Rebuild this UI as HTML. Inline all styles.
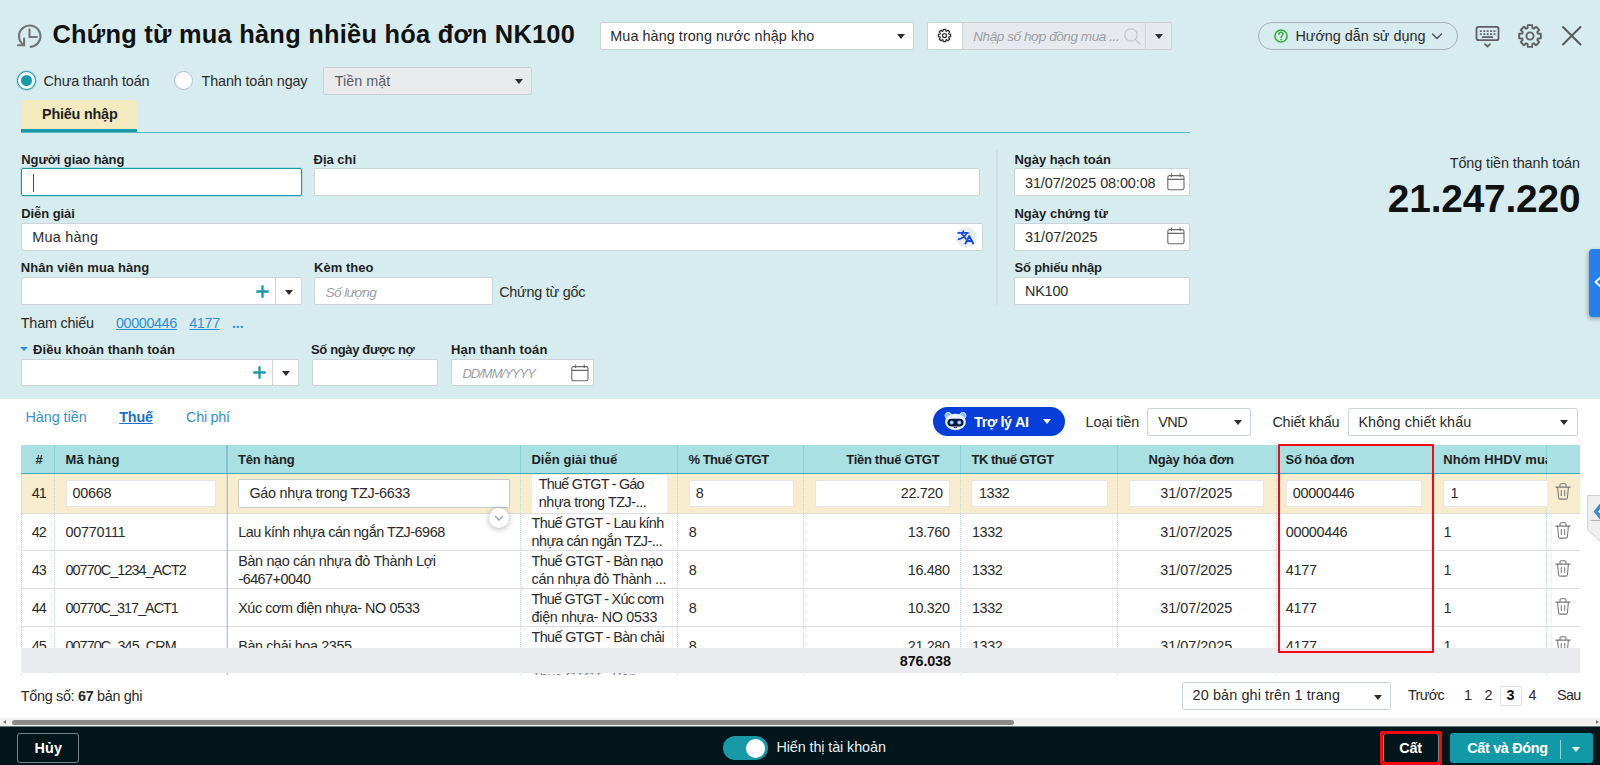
<!DOCTYPE html>
<html lang="vi"><head><meta charset="utf-8"><title>Chứng từ mua hàng nhiều hóa đơn NK100</title>
<style>
*{box-sizing:border-box;margin:0;padding:0}
html,body{width:1600px;height:765px;overflow:hidden;background:#fff}
body{font-family:"Liberation Sans",sans-serif;font-size:13.7px;color:#212121;position:relative}
.b{position:absolute}
.t{position:absolute;white-space:pre;line-height:20px;color:#2a2a2a}
</style></head><body>
<div class="b" style="left:0;top:0;width:1600px;height:399px;background:#d7ecef"></div>
<svg class="b" style="left:14px;top:22px" width="30" height="28" viewBox="0 0 30 28" fill="none" stroke="#747474" stroke-width="2.1" stroke-linecap="round" stroke-linejoin="miter">
<path d="M16.72 24.84A10.7 10.7 0 1 0 10.1 23.3"/><path d="M3.9 23.3H10.1V16.5"/><path d="M15.5 7.2V15H22.8"/></svg>
<div class="t" style="left:52.50px;top:24.00px;font-size:25.4px;letter-spacing:0.252px;font-weight:bold;color:#111;">Chứng từ mua hàng nhiều hóa đơn NK100</div>
<div class="b" style="left:600px;top:22px;width:314px;height:28px;background:#fff;border:1px solid #cdd4d9;border-radius:2px;"></div>
<div class="t" style="left:610.30px;top:26.00px;font-size:14.4px;letter-spacing:0.061px;">Mua hàng trong nước nhập kho</div>
<div class="b" style="left:897px;top:33.5px;width:0;height:0;border-left:4.0px solid transparent;border-right:4.0px solid transparent;border-top:5px solid #2e2e2e"></div>
<div class="b" style="left:927px;top:22px;width:36px;height:28px;background:#fff;border:1px solid #cdd4d9;border-radius:2px 0 0 2px;"></div>
<svg class="b" style="left:937px;top:28px" width="15" height="15" viewBox="0 0 15 15" fill="none" stroke="#333" stroke-width="1.25" stroke-linejoin="round"><circle cx="7.5" cy="7.5" r="2"/><path d="M6.11 3.01L6.25 1.33L8.75 1.33L8.89 3.01L9.69 3.34L10.98 2.25L12.75 4.02L11.66 5.31L11.99 6.11L13.67 6.25L13.67 8.75L11.99 8.89L11.66 9.69L12.75 10.98L10.98 12.75L9.69 11.66L8.89 11.99L8.75 13.67L6.25 13.67L6.11 11.99L5.31 11.66L4.02 12.75L2.25 10.98L3.34 9.69L3.01 8.89L1.33 8.75L1.33 6.25L3.01 6.11L3.34 5.31L2.25 4.02L4.02 2.25L5.31 3.34z"/></svg>
<div class="b" style="left:962px;top:22px;width:184px;height:28px;background:#e6eaee;border:1px solid #cdd4d9;border-radius:0;"></div>
<div class="t" style="left:973.20px;top:27.00px;font-size:13.6px;letter-spacing:-0.462px;font-style:italic;color:#9b9fa4;">Nhập số hợp đồng mua ...</div>
<svg class="b" style="left:1123px;top:27px" width="19" height="19" viewBox="0 0 19 19" fill="none" stroke="#c3c8cd" stroke-width="1.3" stroke-linecap="round"><circle cx="8" cy="8" r="6.2"/><path d="M12.7 12.7l4 4"/></svg>
<div class="b" style="left:1145px;top:22px;width:27px;height:28px;background:#e6eaee;border:1px solid #cdd4d9;border-radius:0 2px 2px 0;"></div>
<div class="b" style="left:1154.5px;top:33.5px;width:0;height:0;border-left:4.0px solid transparent;border-right:4.0px solid transparent;border-top:5px solid #2e2e2e"></div>
<div class="b" style="left:1258px;top:22px;width:200px;height:28px;border:1px solid #aab2b8;border-radius:14px"></div>
<svg class="b" style="left:1273px;top:28px" width="16" height="16" viewBox="0 0 16 16" fill="none"><circle cx="8" cy="8" r="6.1" stroke="#35a935" stroke-width="1.5"/><path d="M5.9 6.4c0-1.3.9-2.1 2.1-2.1s2.1.8 2.1 1.9c0 1.6-2 1.6-2 3.3" stroke="#35a935" stroke-width="1.4" stroke-linecap="round"/><circle cx="8.1" cy="11.6" r=".9" fill="#35a935"/></svg>
<div class="t" style="left:1295.40px;top:26.00px;font-size:14.4px;letter-spacing:-0.019px;">Hướng dẫn sử dụng</div>
<svg class="b" style="left:1431px;top:31.5px" width="12" height="9" viewBox="0 0 12 9" fill="none" stroke="#555" stroke-width="1.5" stroke-linecap="round" stroke-linejoin="round"><path d="M1.5 2l4.5 4.5L10.5 2"/></svg>
<svg class="b" style="left:1475px;top:25px" width="26" height="24" viewBox="0 0 26 24" fill="none" stroke="#5f5f5f" stroke-width="1.75" stroke-linecap="round" stroke-linejoin="round">
<rect x="1.5" y="1.8" width="22" height="13.4" rx="2"/><path d="M5.5 6h.6M9 6h.6M12.4 6h.6M15.8 6h.6M19.2 6h.6M5.5 9h.6M9 9h.6M12.4 9h.6M15.8 9h.6M19.2 9h.6M7.5 12h10"/><path d="M10 19.2l2.5 2.3 2.5-2.3"/></svg>
<svg class="b" style="left:1517px;top:23px" width="26" height="26" viewBox="0 0 24 24" fill="none" stroke="#5f5f5f" stroke-width="1.75" stroke-linejoin="round"><circle cx="12" cy="12" r="3.3"/><path d="M9.75 4.74L9.97 2.00L14.03 2.00L14.25 4.74L15.55 5.28L17.64 3.50L20.50 6.36L18.72 8.45L19.26 9.75L22.00 9.97L22.00 14.03L19.26 14.25L18.72 15.55L20.50 17.64L17.64 20.50L15.55 18.72L14.25 19.26L14.03 22.00L9.97 22.00L9.75 19.26L8.45 18.72L6.36 20.50L3.50 17.64L5.28 15.55L4.74 14.25L2.00 14.03L2.00 9.97L4.74 9.75L5.28 8.45L3.50 6.36L6.36 3.50L8.45 5.28z"/></svg>
<svg class="b" style="left:1561px;top:25px" width="22" height="22" viewBox="0 0 22 22" fill="none" stroke="#5a5a5a" stroke-width="2" stroke-linecap="round"><path d="M2 2l17.5 17.5M19.5 2L2 19.5"/></svg>
<div class="b" style="left:17px;top:71px;width:19px;height:19px;border-radius:50%;background:#fff;border:1px solid #1a9aa9;box-shadow:0 0 0 1px rgba(26,154,169,.25)"></div>
<div class="b" style="left:21px;top:75px;width:11px;height:11px;border-radius:50%;background:#1a9aa9"></div>
<div class="t" style="left:43.60px;top:71.00px;font-size:14.4px;letter-spacing:-0.151px;">Chưa thanh toán</div>
<div class="b" style="left:174px;top:71px;width:19px;height:19px;border-radius:50%;background:#fff;border:1px solid #b9c0c6"></div>
<div class="t" style="left:201.60px;top:71.00px;font-size:14.4px;letter-spacing:-0.148px;">Thanh toán ngay</div>
<div class="b" style="left:323px;top:67px;width:209px;height:28px;background:#e8eaed;border:1px solid #cdd2d7;border-radius:2px;"></div>
<div class="t" style="left:334.70px;top:71.00px;font-size:14.4px;letter-spacing:0.018px;color:#5a5f64;">Tiền mặt</div>
<div class="b" style="left:514.6px;top:78.5px;width:0;height:0;border-left:4.0px solid transparent;border-right:4.0px solid transparent;border-top:5px solid #2e2e2e"></div>
<div class="b" style="left:21px;top:100px;width:116px;height:32px;background:#f3eabf;border-radius:4px 4px 0 0;border-bottom:3px solid #1a9aa9"></div>
<div class="t" style="left:42.00px;top:104.00px;font-size:14.4px;letter-spacing:-0.206px;font-weight:bold;color:#1f1f1f;">Phiếu nhập</div>
<div class="b" style="left:21px;top:132px;width:1169px;height:1px;background:#55b9c3"></div>
<div class="t" style="left:21.30px;top:150.00px;font-size:13.0px;letter-spacing:-0.107px;font-weight:bold;color:#1f1f1f;">Người giao hàng</div>
<div class="b" style="left:21px;top:168px;width:281px;height:28px;background:#fff;border:1px solid #1a9aa9;border-radius:2px;box-shadow:0 0 0 1px rgba(26,154,169,.18)"></div>
<div class="b" style="left:32.5px;top:173.5px;width:1px;height:18px;background:#444"></div>
<div class="t" style="left:313.60px;top:150.00px;font-size:13.0px;letter-spacing:-0.018px;font-weight:bold;color:#1f1f1f;">Địa chỉ</div>
<div class="b" style="left:314px;top:168px;width:666px;height:28px;background:#fff;border:1px solid #cdd4d9;border-radius:2px;"></div>
<div class="b" style="left:995.5px;top:150px;width:2px;height:155px;background:#cfe3e7"></div>
<div class="t" style="left:1014.40px;top:150.00px;font-size:13.0px;letter-spacing:-0.021px;font-weight:bold;color:#1f1f1f;">Ngày hạch toán</div>
<div class="b" style="left:1014px;top:168px;width:176px;height:28px;background:#fff;border:1px solid #cdd4d9;border-radius:2px;"></div>
<div class="t" style="left:1025.00px;top:173.00px;font-size:14.4px;letter-spacing:-0.081px;">31/07/2025 08:00:08</div>
<svg class="b" style="left:1166.5px;top:172.5px" width="18" height="18" viewBox="0 0 18 18" fill="none" stroke="#6a6a6a" stroke-width="1.1"><rect x="0.8" y="2.6" width="16.2" height="14.2" rx="1.8"/><path d="M0.8 6.4h16.2M4.6 0.6v3.4M13.2 0.6v3.4"/></svg>
<div class="t" style="left:1449.72px;top:153.00px;font-size:14.4px;letter-spacing:-0.092px;">Tổng tiền thanh toán</div>
<div class="t" style="left:1387.83px;top:189.00px;font-size:38.8px;letter-spacing:-0.169px;font-weight:bold;color:#111;">21.247.220</div>
<div class="t" style="left:21.20px;top:204.00px;font-size:13.0px;letter-spacing:-0.065px;font-weight:bold;color:#1f1f1f;">Diễn giải</div>
<div class="b" style="left:21px;top:223px;width:962px;height:28px;background:#fff;border:1px solid #cdd4d9;border-radius:2px;"></div>
<div class="t" style="left:32.30px;top:227.00px;font-size:14.4px;letter-spacing:0.248px;">Mua hàng</div>
<div class="b" style="left:955.5px;top:227px;width:21px;height:21px;border-radius:50%;background:#eaedf1"></div>
<svg class="b" style="left:955px;top:227px" width="22" height="21" viewBox="0 0 22 21" fill="none" stroke="#164ad8" stroke-width="1.75" stroke-linecap="round" stroke-linejoin="round"><path d="M3.2 5.9H13M8.3 4.1V5.9M6.9 7L10.8 11.900M11.800 6Q10 10.500 3.500 12.300"/><path d="M10.4 16.500L14.3 9l3.900 7.500M11.900 14h4.800" stroke-width="1.9"/></svg>
<div class="t" style="left:1014.40px;top:204.00px;font-size:13.0px;letter-spacing:0.02px;font-weight:bold;color:#1f1f1f;">Ngày chứng từ</div>
<div class="b" style="left:1014px;top:223px;width:176px;height:28px;background:#fff;border:1px solid #cdd4d9;border-radius:2px;"></div>
<div class="t" style="left:1025.00px;top:227.00px;font-size:14.4px;letter-spacing:0.047px;">31/07/2025</div>
<svg class="b" style="left:1166.5px;top:226.5px" width="18" height="18" viewBox="0 0 18 18" fill="none" stroke="#6a6a6a" stroke-width="1.1"><rect x="0.8" y="2.6" width="16.2" height="14.2" rx="1.8"/><path d="M0.8 6.4h16.2M4.6 0.6v3.4M13.2 0.6v3.4"/></svg>
<div class="t" style="left:20.80px;top:258.00px;font-size:13.0px;letter-spacing:0.076px;font-weight:bold;color:#1f1f1f;">Nhân viên mua hàng</div>
<div class="b" style="left:21px;top:277px;width:281px;height:28px;background:#fff;border:1px solid #cdd4d9;border-radius:2px;"></div>
<div class="b" style="left:275px;top:278px;width:1px;height:26px;background:#cdd4d9"></div>
<svg class="b" style="left:255.6px;top:285px" width="13" height="13" viewBox="0 0 13 13" stroke="#1a9aa9" stroke-width="2.3"><path d="M6.5 0.3v12.4M0.3 6.5h12.4"/></svg>
<div class="b" style="left:284.5px;top:289.5px;width:0;height:0;border-left:4.0px solid transparent;border-right:4.0px solid transparent;border-top:5px solid #2e2e2e"></div>
<div class="t" style="left:314.00px;top:258.00px;font-size:13.0px;letter-spacing:0.033px;font-weight:bold;color:#1f1f1f;">Kèm theo</div>
<div class="b" style="left:314px;top:277px;width:179px;height:28px;background:#fff;border:1px solid #cdd4d9;border-radius:2px;"></div>
<div class="t" style="left:325.60px;top:283.00px;font-size:13.6px;letter-spacing:-0.611px;font-style:italic;color:#9b9fa4;">Số lượng</div>
<div class="t" style="left:499.20px;top:282.00px;font-size:14.4px;letter-spacing:-0.24px;">Chứng từ gốc</div>
<div class="t" style="left:1014.40px;top:258.00px;font-size:13.0px;letter-spacing:-0.159px;font-weight:bold;color:#1f1f1f;">Số phiếu nhập</div>
<div class="b" style="left:1014px;top:277px;width:176px;height:28px;background:#fff;border:1px solid #cdd4d9;border-radius:2px;"></div>
<div class="t" style="left:1025.00px;top:281.00px;font-size:14.4px;letter-spacing:-0.203px;">NK100</div>
<div class="t" style="left:20.80px;top:313.00px;font-size:14.4px;letter-spacing:-0.219px;">Tham chiếu</div>
<div class="t" style="left:116.00px;top:313.00px;font-size:14.4px;letter-spacing:-0.404px;color:#2f8fd8;text-decoration:underline;">00000446</div>
<div class="t" style="left:189.20px;top:313.00px;font-size:14.4px;letter-spacing:-0.354px;color:#2f8fd8;text-decoration:underline;">4177</div>
<div class="t" style="left:232.00px;top:313.00px;font-size:14.4px;letter-spacing:-0.167px;font-weight:bold;color:#2f8fd8;">...</div>
<div class="b" style="left:19.5px;top:346.5px;width:0;height:0;border-left:4.0px solid transparent;border-right:4.0px solid transparent;border-top:4.5px solid #2f8fd8"></div>
<div class="t" style="left:33.00px;top:340.00px;font-size:13.0px;letter-spacing:0.089px;font-weight:bold;color:#1f1f1f;">Điều khoản thanh toán</div>
<div class="b" style="left:21px;top:359px;width:278px;height:27px;background:#fff;border:1px solid #cdd4d9;border-radius:2px;"></div>
<div class="b" style="left:271.5px;top:360px;width:1px;height:25px;background:#cdd4d9"></div>
<svg class="b" style="left:253.2px;top:366px" width="13" height="13" viewBox="0 0 13 13" stroke="#1a9aa9" stroke-width="2.3"><path d="M6.5 0.3v12.4M0.3 6.5h12.4"/></svg>
<div class="b" style="left:282px;top:370.5px;width:0;height:0;border-left:4.0px solid transparent;border-right:4.0px solid transparent;border-top:5px solid #2e2e2e"></div>
<div class="t" style="left:311.00px;top:340.00px;font-size:13.0px;letter-spacing:-0.354px;font-weight:bold;color:#1f1f1f;">Số ngày được nợ</div>
<div class="b" style="left:312px;top:359px;width:126px;height:27px;background:#fff;border:1px solid #cdd4d9;border-radius:2px;"></div>
<div class="t" style="left:451.00px;top:340.00px;font-size:13.0px;letter-spacing:0.135px;font-weight:bold;color:#1f1f1f;">Hạn thanh toán</div>
<div class="b" style="left:451px;top:359px;width:143px;height:27px;background:#fff;border:1px solid #cdd4d9;border-radius:2px;"></div>
<div class="t" style="left:462.40px;top:364.00px;font-size:13px;letter-spacing:-0.984px;font-style:italic;color:#9b9fa4;">DD/MM/YYYY</div>
<svg class="b" style="left:570.5px;top:363.5px" width="18" height="18" viewBox="0 0 18 18" fill="none" stroke="#6a6a6a" stroke-width="1.1"><rect x="0.8" y="2.6" width="16.2" height="14.2" rx="1.8"/><path d="M0.8 6.4h16.2M4.6 0.6v3.4M13.2 0.6v3.4"/></svg>
<div class="b" style="left:1589px;top:249px;width:14px;height:68px;background:#2680eb;border-radius:4px 0 0 4px;box-shadow:-1px 2px 4px rgba(0,0,0,.3)"></div>
<svg class="b" style="left:1594px;top:276px" width="8" height="12" viewBox="0 0 8 12" fill="none" stroke="#fff" stroke-width="1.8" stroke-linecap="round" stroke-linejoin="round"><path d="M6.5 1.5L1.5 6l5 4.500"/></svg>
<div class="t" style="left:25.40px;top:407.00px;font-size:14.4px;letter-spacing:-0.045px;color:#3590cf;">Hàng tiền</div>
<div class="t" style="left:119.20px;top:407.00px;font-size:14.4px;letter-spacing:-0.194px;font-weight:bold;color:#1a73c9;text-decoration:underline;">Thuế</div>
<div class="t" style="left:186.00px;top:407.00px;font-size:14.4px;letter-spacing:-0.258px;color:#3590cf;">Chi phí</div>
<div class="b" style="left:933px;top:407px;width:132px;height:29px;background:#063ed9;border-radius:15px"></div>
<svg class="b" style="left:944px;top:411px" width="23" height="20" viewBox="0 0 23 20">
<circle cx="4.2" cy="4.6" r="3.2" fill="#8fc0fb" stroke="#dbe9fd" stroke-width=".9"/><circle cx="18.800" cy="4.6" r="3.2" fill="#8fc0fb" stroke="#dbe9fd" stroke-width=".9"/>
<ellipse cx="11.5" cy="11" rx="10.4" ry="8.3" fill="#e9f1fd"/>
<rect x="3.4" y="7.8" width="16.2" height="7.6" rx="3.8" fill="#0a1a3c"/>
<circle cx="7.700" cy="11.600" r="2" fill="#7db4ff"/><circle cx="15.300" cy="11.600" r="2" fill="#7db4ff"/><circle cx="7.700" cy="11.600" r=".9" fill="#fff"/><circle cx="15.300" cy="11.600" r=".9" fill="#fff"/>
<path d="M10 16.300q1.500 1.300 3 0" stroke="#0a1a3c" stroke-width="1" fill="none" stroke-linecap="round"/></svg>
<div class="t" style="left:974.00px;top:412.00px;font-size:14.4px;letter-spacing:-0.343px;font-weight:bold;color:#fff;">Trợ lý AI</div>
<div class="b" style="left:1042.6px;top:419px;width:0;height:0;border-left:4.3px solid transparent;border-right:4.3px solid transparent;border-top:5.2px solid #fff"></div>
<div class="t" style="left:1085.60px;top:412.00px;font-size:14.4px;letter-spacing:-0.102px;">Loại tiền</div>
<div class="b" style="left:1147px;top:408px;width:104px;height:28px;background:#fff;border:1px solid #cdd4d9;border-radius:2px;"></div>
<div class="t" style="left:1158.20px;top:412.00px;font-size:14.4px;letter-spacing:-0.464px;">VND</div>
<div class="b" style="left:1234px;top:419.5px;width:0;height:0;border-left:4.0px solid transparent;border-right:4.0px solid transparent;border-top:5px solid #2e2e2e"></div>
<div class="t" style="left:1272.40px;top:412.00px;font-size:14.4px;letter-spacing:-0.181px;">Chiết khấu</div>
<div class="b" style="left:1348px;top:408px;width:230px;height:28px;background:#fff;border:1px solid #cdd4d9;border-radius:2px;"></div>
<div class="t" style="left:1358.40px;top:412.00px;font-size:14.4px;letter-spacing:0.111px;">Không chiết khấu</div>
<div class="b" style="left:1560px;top:419.5px;width:0;height:0;border-left:4.0px solid transparent;border-right:4.0px solid transparent;border-top:5px solid #2e2e2e"></div>
<div class="b" style="left:21px;top:445px;width:1559px;height:29px;background:#a9e0e4;border-bottom:1px solid #35acba"></div>
<div class="b" style="left:21px;top:474px;width:1559px;height:39px;background:#f8ecce"></div>
<div class="b" style="left:21px;top:513px;width:1559px;height:1px;background:#dcdfe2"></div>
<div class="b" style="left:21px;top:550px;width:1559px;height:1px;background:#dcdfe2"></div>
<div class="b" style="left:21px;top:588px;width:1559px;height:1px;background:#dcdfe2"></div>
<div class="b" style="left:21px;top:626px;width:1559px;height:1px;background:#dcdfe2"></div>
<div class="b" style="left:54px;top:445px;width:1px;height:28px;background:#8ccfd6"></div>
<div class="b" style="left:226px;top:445px;width:2px;height:28px;background:rgba(120,170,200,.62)"></div>
<div class="b" style="left:520px;top:445px;width:1px;height:28px;background:#8ccfd6"></div>
<div class="b" style="left:677px;top:445px;width:1px;height:28px;background:#8ccfd6"></div>
<div class="b" style="left:803px;top:445px;width:1px;height:28px;background:#8ccfd6"></div>
<div class="b" style="left:960px;top:445px;width:1px;height:28px;background:#8ccfd6"></div>
<div class="b" style="left:1117px;top:445px;width:1px;height:28px;background:#8ccfd6"></div>
<div class="b" style="left:1276px;top:445px;width:1px;height:28px;background:#8ccfd6"></div>
<div class="b" style="left:1433px;top:445px;width:1px;height:28px;background:#8ccfd6"></div>
<div class="b" style="left:1546px;top:445px;width:1px;height:28px;background:#8ccfd6"></div>
<div class="b" style="left:21px;top:474px;width:0;height:201px;border-left:1px dotted #b4dbe1"></div>
<div class="b" style="left:54px;top:474px;width:0;height:201px;border-left:1px dotted #b4dbe1"></div>
<div class="b" style="left:226px;top:474px;width:1px;height:201px;background:rgba(120,180,200,.22)"></div><div class="b" style="left:227px;top:474px;width:1px;height:201px;background:rgba(110,185,205,.7)"></div>
<div class="b" style="left:520px;top:474px;width:0;height:201px;border-left:1px dotted #b4dbe1"></div>
<div class="b" style="left:677px;top:474px;width:0;height:201px;border-left:1px dotted #b4dbe1"></div>
<div class="b" style="left:803px;top:474px;width:0;height:201px;border-left:1px dotted #b4dbe1"></div>
<div class="b" style="left:960px;top:474px;width:0;height:201px;border-left:1px dotted #b4dbe1"></div>
<div class="b" style="left:1117px;top:474px;width:0;height:201px;border-left:1px dotted #b4dbe1"></div>
<div class="b" style="left:1276px;top:474px;width:0;height:201px;border-left:1px dotted #b4dbe1"></div>
<div class="b" style="left:1433px;top:474px;width:0;height:201px;border-left:1px dotted #b4dbe1"></div>
<div class="b" style="left:1546px;top:474px;width:0;height:201px;border-left:1px dotted #b4dbe1"></div>
<div class="t" style="left:35.58px;top:450.00px;font-size:13.0px;letter-spacing:1.099px;font-weight:bold;color:#1f1f1f;">#</div>
<div class="t" style="left:65.60px;top:450.00px;font-size:13.0px;letter-spacing:0.181px;font-weight:bold;color:#1f1f1f;">Mã hàng</div>
<div class="t" style="left:238.00px;top:450.00px;font-size:13.0px;letter-spacing:-0.16px;font-weight:bold;color:#1f1f1f;">Tên hàng</div>
<div class="t" style="left:531.40px;top:450.00px;font-size:13.0px;letter-spacing:0.055px;font-weight:bold;color:#1f1f1f;">Diễn giải thuế</div>
<div class="t" style="left:688.60px;top:450.00px;font-size:13.0px;letter-spacing:-0.541px;font-weight:bold;color:#1f1f1f;">% Thuế GTGT</div>
<div class="t" style="left:846.30px;top:450.00px;font-size:13.0px;letter-spacing:-0.305px;font-weight:bold;color:#1f1f1f;">Tiền thuế GTGT</div>
<div class="t" style="left:971.60px;top:450.00px;font-size:13.0px;letter-spacing:-0.509px;font-weight:bold;color:#1f1f1f;">TK thuế GTGT</div>
<div class="t" style="left:1148.40px;top:450.00px;font-size:13.0px;letter-spacing:-0.146px;font-weight:bold;color:#1f1f1f;">Ngày hóa đơn</div>
<div class="t" style="left:1285.60px;top:450.00px;font-size:13.0px;letter-spacing:-0.358px;font-weight:bold;color:#1f1f1f;">Số hóa đơn</div>
<div class="b" style="left:1434px;top:446px;width:113px;height:26px;overflow:hidden"><div class="t" style="left:9.20px;top:4.00px;font-size:13.0px;letter-spacing:0.119px;font-weight:bold;color:#1f1f1f;">Nhóm HHDV mua</div></div>
<div class="b" style="left:66px;top:480px;width:150px;height:27px;background:#fff;border:1px solid #e3e6ea;border-radius:2px;"></div>
<div class="b" style="left:238px;top:479px;width:272px;height:29px;background:#fff;border:1px solid #c4cbd1;border-radius:2px;"></div>
<div class="b" style="left:532px;top:475px;width:135px;height:38px;background:#fff;border:1px solid #fff;border-radius:2px;"></div>
<div class="b" style="left:689px;top:480px;width:105px;height:27px;background:#fff;border:1px solid #e3e6ea;border-radius:2px;"></div>
<div class="b" style="left:815px;top:480px;width:135px;height:27px;background:#fff;border:1px solid #e3e6ea;border-radius:2px;"></div>
<div class="b" style="left:971px;top:480px;width:137px;height:27px;background:#fff;border:1px solid #e3e6ea;border-radius:2px;"></div>
<div class="b" style="left:1129px;top:480px;width:135px;height:27px;background:#fff;border:1px solid #e3e6ea;border-radius:2px;"></div>
<div class="b" style="left:1286px;top:480px;width:136px;height:27px;background:#fff;border:1px solid #e3e6ea;border-radius:2px;"></div>
<div class="b" style="left:1443px;top:480px;width:104px;height:27px;background:#fff;border:1px solid #e3e6ea;border-right:0;border-radius:2px 0 0 2px"></div>
<div class="b" style="left:0;top:474px;width:1600px;height:174px;overflow:hidden"><div class="b" style="left:0;top:-474px;width:1600px;height:765px">
<div class="t" style="left:31.65px;top:483.00px;font-size:14.4px;letter-spacing:-0.908px;">41</div>
<div class="t" style="left:72.60px;top:483.00px;font-size:14.4px;letter-spacing:-0.246px;">00668</div>
<div class="t" style="left:249.40px;top:483.00px;font-size:14.4px;letter-spacing:-0.281px;">Gáo nhựa trong TZJ-6633</div>
<div class="t" style="left:538.80px;top:474.00px;font-size:14.4px;letter-spacing:-0.767px;">Thuế GTGT - Gáo</div>
<div class="t" style="left:538.80px;top:492.00px;font-size:14.4px;letter-spacing:-0.458px;">nhựa trong TZJ-...</div>
<div class="t" style="left:695.80px;top:483.00px;font-size:14.4px;letter-spacing:-0.016px;">8</div>
<div class="t" style="left:900.83px;top:483.00px;font-size:14.4px;letter-spacing:-0.369px;">22.720</div>
<div class="t" style="left:979.00px;top:483.00px;font-size:14.4px;letter-spacing:-0.379px;">1332</div>
<div class="t" style="left:1160.20px;top:483.00px;font-size:14.4px;letter-spacing:-0.003px;">31/07/2025</div>
<div class="t" style="left:1292.80px;top:483.00px;font-size:14.4px;letter-spacing:-0.316px;">00000446</div>
<div class="t" style="left:1450.60px;top:483.00px;font-size:14.4px;letter-spacing:-0.016px;">1</div>
<svg class="b" style="left:1555px;top:483.2px;opacity:1" width="16" height="17" viewBox="0 0 16 17" fill="none" stroke="#777" stroke-width="1.05" stroke-linecap="round" stroke-linejoin="round"><path d="M0.8 4.1h14.4M5 4V1.9c0-.7.5-1.2 1.2-1.2h3.6c.7 0 1.2.5 1.2 1.2V4M2.6 4.3l1 10.4c.1.9.7 1.4 1.5 1.4h5.8c.8 0 1.4-.5 1.5-1.4l1-10.4M6.3 7.5v5M9.7 7.5v5"/></svg>
<div class="t" style="left:31.65px;top:522.00px;font-size:14.4px;letter-spacing:-0.908px;">42</div>
<div class="t" style="left:65.40px;top:522.00px;font-size:14.4px;letter-spacing:-0.236px;">00770111</div>
<div class="t" style="left:238.20px;top:522.00px;font-size:14.4px;letter-spacing:-0.48px;">Lau kính nhựa cán ngắn TZJ-6968</div>
<div class="t" style="left:531.60px;top:513.00px;font-size:14.4px;letter-spacing:-0.626px;">Thuế GTGT - Lau kính</div>
<div class="t" style="left:531.60px;top:531.00px;font-size:14.4px;letter-spacing:-0.556px;">nhựa cán ngắn TZJ-...</div>
<div class="t" style="left:688.80px;top:522.00px;font-size:14.4px;letter-spacing:-0.016px;">8</div>
<div class="t" style="left:907.83px;top:522.00px;font-size:14.4px;letter-spacing:-0.369px;">13.760</div>
<div class="t" style="left:972.00px;top:522.00px;font-size:14.4px;letter-spacing:-0.379px;">1332</div>
<div class="t" style="left:1160.20px;top:522.00px;font-size:14.4px;letter-spacing:-0.003px;">31/07/2025</div>
<div class="t" style="left:1285.80px;top:522.00px;font-size:14.4px;letter-spacing:-0.316px;">00000446</div>
<div class="t" style="left:1443.60px;top:522.00px;font-size:14.4px;letter-spacing:-0.016px;">1</div>
<svg class="b" style="left:1555px;top:521.6px;opacity:1" width="16" height="17" viewBox="0 0 16 17" fill="none" stroke="#777" stroke-width="1.05" stroke-linecap="round" stroke-linejoin="round"><path d="M0.8 4.1h14.4M5 4V1.9c0-.7.5-1.2 1.2-1.2h3.6c.7 0 1.2.5 1.2 1.2V4M2.6 4.3l1 10.4c.1.9.7 1.4 1.5 1.4h5.8c.8 0 1.4-.5 1.5-1.4l1-10.4M6.3 7.5v5M9.7 7.5v5"/></svg>
<div class="t" style="left:31.65px;top:560.00px;font-size:14.4px;letter-spacing:-0.908px;">43</div>
<div class="t" style="left:65.40px;top:560.00px;font-size:14.4px;letter-spacing:-0.92px;">00770C_1234_ACT2</div>
<div class="t" style="left:238.20px;top:551.00px;font-size:14.4px;letter-spacing:-0.35px;">Bàn nạo cán nhựa đỏ Thành Lợi</div>
<div class="t" style="left:238.40px;top:569.00px;font-size:14.4px;letter-spacing:-0.523px;">-6467+0040</div>
<div class="t" style="left:531.60px;top:551.00px;font-size:14.4px;letter-spacing:-0.627px;">Thuế GTGT - Bàn nạo</div>
<div class="t" style="left:531.60px;top:569.00px;font-size:14.4px;letter-spacing:-0.328px;">cán nhựa đỏ Thành ...</div>
<div class="t" style="left:688.80px;top:560.00px;font-size:14.4px;letter-spacing:-0.016px;">8</div>
<div class="t" style="left:907.83px;top:560.00px;font-size:14.4px;letter-spacing:-0.369px;">16.480</div>
<div class="t" style="left:972.00px;top:560.00px;font-size:14.4px;letter-spacing:-0.379px;">1332</div>
<div class="t" style="left:1160.20px;top:560.00px;font-size:14.4px;letter-spacing:-0.003px;">31/07/2025</div>
<div class="t" style="left:1285.80px;top:560.00px;font-size:14.4px;letter-spacing:-0.254px;">4177</div>
<div class="t" style="left:1443.60px;top:560.00px;font-size:14.4px;letter-spacing:-0.016px;">1</div>
<svg class="b" style="left:1555px;top:559.6px;opacity:1" width="16" height="17" viewBox="0 0 16 17" fill="none" stroke="#777" stroke-width="1.05" stroke-linecap="round" stroke-linejoin="round"><path d="M0.8 4.1h14.4M5 4V1.9c0-.7.5-1.2 1.2-1.2h3.6c.7 0 1.2.5 1.2 1.2V4M2.6 4.3l1 10.4c.1.9.7 1.4 1.5 1.4h5.8c.8 0 1.4-.5 1.5-1.4l1-10.4M6.3 7.5v5M9.7 7.5v5"/></svg>
<div class="t" style="left:31.65px;top:598.00px;font-size:14.4px;letter-spacing:-0.908px;">44</div>
<div class="t" style="left:65.40px;top:598.00px;font-size:14.4px;letter-spacing:-0.981px;">00770C_317_ACT1</div>
<div class="t" style="left:238.20px;top:598.00px;font-size:14.4px;letter-spacing:-0.429px;">Xúc cơm điện nhựa- NO 0533</div>
<div class="t" style="left:531.60px;top:589.00px;font-size:14.4px;letter-spacing:-0.775px;">Thuế GTGT - Xúc cơm</div>
<div class="t" style="left:531.60px;top:607.00px;font-size:14.4px;letter-spacing:-0.319px;">điện nhựa- NO 0533</div>
<div class="t" style="left:688.80px;top:598.00px;font-size:14.4px;letter-spacing:-0.016px;">8</div>
<div class="t" style="left:907.83px;top:598.00px;font-size:14.4px;letter-spacing:-0.369px;">10.320</div>
<div class="t" style="left:972.00px;top:598.00px;font-size:14.4px;letter-spacing:-0.379px;">1332</div>
<div class="t" style="left:1160.20px;top:598.00px;font-size:14.4px;letter-spacing:-0.003px;">31/07/2025</div>
<div class="t" style="left:1285.80px;top:598.00px;font-size:14.4px;letter-spacing:-0.254px;">4177</div>
<div class="t" style="left:1443.60px;top:598.00px;font-size:14.4px;letter-spacing:-0.016px;">1</div>
<svg class="b" style="left:1555px;top:597.6px;opacity:1" width="16" height="17" viewBox="0 0 16 17" fill="none" stroke="#777" stroke-width="1.05" stroke-linecap="round" stroke-linejoin="round"><path d="M0.8 4.1h14.4M5 4V1.9c0-.7.5-1.2 1.2-1.2h3.6c.7 0 1.2.5 1.2 1.2V4M2.6 4.3l1 10.4c.1.9.7 1.4 1.5 1.4h5.8c.8 0 1.4-.5 1.5-1.4l1-10.4M6.3 7.5v5M9.7 7.5v5"/></svg>
<div class="t" style="left:31.65px;top:636.00px;font-size:14.4px;letter-spacing:-0.908px;">45</div>
<div class="t" style="left:65.40px;top:636.00px;font-size:14.4px;letter-spacing:-0.907px;">00770C_345_CRM</div>
<div class="t" style="left:238.20px;top:636.00px;font-size:14.4px;letter-spacing:-0.384px;">Bàn chải hoa 2355</div>
<div class="t" style="left:531.60px;top:627.00px;font-size:14.4px;letter-spacing:-0.641px;">Thuế GTGT - Bàn chải</div>
<div class="t" style="left:531.60px;top:645.00px;font-size:14.4px;letter-spacing:-0.095px;">lông hoa 2355</div>
<div class="t" style="left:688.80px;top:636.00px;font-size:14.4px;letter-spacing:-0.016px;">8</div>
<div class="t" style="left:907.83px;top:636.00px;font-size:14.4px;letter-spacing:-0.369px;">21.280</div>
<div class="t" style="left:972.00px;top:636.00px;font-size:14.4px;letter-spacing:-0.379px;">1332</div>
<div class="t" style="left:1160.20px;top:636.00px;font-size:14.4px;letter-spacing:-0.003px;">31/07/2025</div>
<div class="t" style="left:1285.80px;top:636.00px;font-size:14.4px;letter-spacing:-0.254px;">4177</div>
<div class="t" style="left:1443.60px;top:636.00px;font-size:14.4px;letter-spacing:-0.016px;">1</div>
<svg class="b" style="left:1555px;top:635.6px;opacity:1" width="16" height="17" viewBox="0 0 16 17" fill="none" stroke="#777" stroke-width="1.05" stroke-linecap="round" stroke-linejoin="round"><path d="M0.8 4.1h14.4M5 4V1.9c0-.7.5-1.2 1.2-1.2h3.6c.7 0 1.2.5 1.2 1.2V4M2.6 4.3l1 10.4c.1.9.7 1.4 1.5 1.4h5.8c.8 0 1.4-.5 1.5-1.4l1-10.4M6.3 7.5v5M9.7 7.5v5"/></svg>
</div></div>
<div class="b" style="left:489px;top:508px;width:20px;height:20px;border-radius:50%;background:#fff;box-shadow:0 1px 6px rgba(0,0,0,.32)"></div>
<svg class="b" style="left:494px;top:515px" width="10" height="7" viewBox="0 0 10 7" fill="none" stroke="#9aa0a6" stroke-width="1.3" stroke-linecap="round" stroke-linejoin="round"><path d="M1.5 1.5L5 5l3.500-3.500"/></svg>
<div class="b" style="left:21px;top:648px;width:1559px;height:25px;background:#e9ebef"></div>
<div class="t" style="left:899.85px;top:651.00px;font-size:14.4px;letter-spacing:-0.147px;font-weight:bold;color:#111;">876.038</div>
<div class="b" style="left:530px;top:673px;width:120px;height:2px;overflow:hidden;opacity:.55"><div class="t" style="left:2.00px;top:-6.00px;font-size:14.4px;letter-spacing:-0.727px;">Thuế GTGT - Bàn</div></div>
<div class="b" style="left:1278px;top:443.5px;width:156px;height:209px;border:2px solid #f5080e;border-radius:1px"></div>
<svg class="b" style="left:1585px;top:493px" width="15" height="50" viewBox="0 0 15 50"><path d="M2.700 2.500h13v46l-13-11.500z" fill="#efefef" stroke="#cfcfcf" stroke-width="1"/><path d="M8.500 18.600l6-7.500h2v15h-2z" fill="#3a8fcf"/><path d="M12.800 18.600l2.200-2v4z" fill="#fff"/><path d="M5.500 27.400h10" stroke="#a5adad" stroke-width="1"/></svg>
<div class="t" style="left:20.8px;top:685.5px;font-size:14.4px;letter-spacing:-0.31px">Tổng số: <b>67</b> bản ghi</div>
<div class="b" style="left:1182px;top:682px;width:209px;height:28px;background:#fff;border:1px solid #cdd4d9;border-radius:2px;"></div>
<div class="t" style="left:1192.60px;top:685.00px;font-size:14.4px;letter-spacing:0.116px;">20 bản ghi trên 1 trang</div>
<div class="b" style="left:1374px;top:694.5px;width:0;height:0;border-left:4.0px solid transparent;border-right:4.0px solid transparent;border-top:5px solid #2e2e2e"></div>
<div class="t" style="left:1408.00px;top:685.00px;font-size:14.4px;letter-spacing:-0.666px;">Trước</div>
<div class="t" style="left:1464.00px;top:685.00px;font-size:14.4px;letter-spacing:-0.016px;">1</div>
<div class="t" style="left:1484.60px;top:685.00px;font-size:14.4px;letter-spacing:-0.016px;">2</div>
<div class="b" style="left:1499.500px;top:685.500px;width:22px;height:20px;border:1px solid #dfe2e6;border-radius:2px;background:#fff"></div>
<div class="t" style="left:1506.60px;top:685.00px;font-size:14.4px;letter-spacing:-0.016px;font-weight:bold;color:#111;">3</div>
<div class="t" style="left:1528.40px;top:685.00px;font-size:14.4px;letter-spacing:-0.016px;">4</div>
<div class="t" style="left:1557.00px;top:685.00px;font-size:14.4px;letter-spacing:-0.703px;">Sau</div>
<div class="b" style="left:0;top:718px;width:1600px;height:8px;background:#f1f1f1"></div>
<div class="b" style="left:12px;top:719.500px;width:1002px;height:5.500px;background:#8b8b8b;border-radius:3px"></div>
<div class="b" style="left:3px;top:720px;width:0;height:0;border-top:2.500px solid transparent;border-bottom:2.500px solid transparent;border-right:3px solid #777"></div>
<div class="b" style="left:1595.500px;top:720px;width:0;height:0;border-top:2.500px solid transparent;border-bottom:2.500px solid transparent;border-left:3px solid #777"></div>
<div class="b" style="left:0;top:726px;width:1600px;height:39px;background:#02161b"></div>
<div class="b" style="left:0;top:726px;width:1600px;height:1px;background:#6d797c"></div>
<div class="b" style="left:17px;top:733px;width:62px;height:30px;border:1px solid #7b868a;border-radius:3px"></div>
<div class="t" style="left:34.60px;top:738.00px;font-size:14.4px;letter-spacing:0.104px;font-weight:bold;color:#fff;">Hủy</div>
<div class="b" style="left:723px;top:736px;width:45px;height:24px;border-radius:12px;background:#1799a8"></div>
<div class="b" style="left:746px;top:738.500px;width:19px;height:19px;border-radius:50%;background:#fff"></div>
<div class="t" style="left:776.40px;top:737.00px;font-size:14.4px;letter-spacing:-0.1px;color:#e9eff1;">Hiển thị tài khoản</div>
<div class="b" style="left:1383px;top:733px;width:56px;height:30px;border:1px solid #7b868a;border-radius:3px"></div>
<div class="b" style="left:1380px;top:731px;width:62px;height:34px;border:3px solid #f5080e;border-radius:2px"></div>
<div class="t" style="left:1399.20px;top:738.00px;font-size:14.4px;letter-spacing:-0.201px;font-weight:bold;color:#fff;">Cất</div>
<div class="b" style="left:1450px;top:733px;width:143px;height:30px;background:#1299a8;border-radius:3px"></div>
<div class="t" style="left:1467.20px;top:738.00px;font-size:14.4px;letter-spacing:-0.306px;font-weight:bold;color:#fff;">Cất và Đóng</div>
<div class="b" style="left:1559.500px;top:739.500px;width:1px;height:19.500px;background:#8fd5dc"></div>
<div class="b" style="left:1571.8px;top:746.5px;width:0;height:0;border-left:4.25px solid transparent;border-right:4.25px solid transparent;border-top:5px solid #fff"></div>
</body></html>
